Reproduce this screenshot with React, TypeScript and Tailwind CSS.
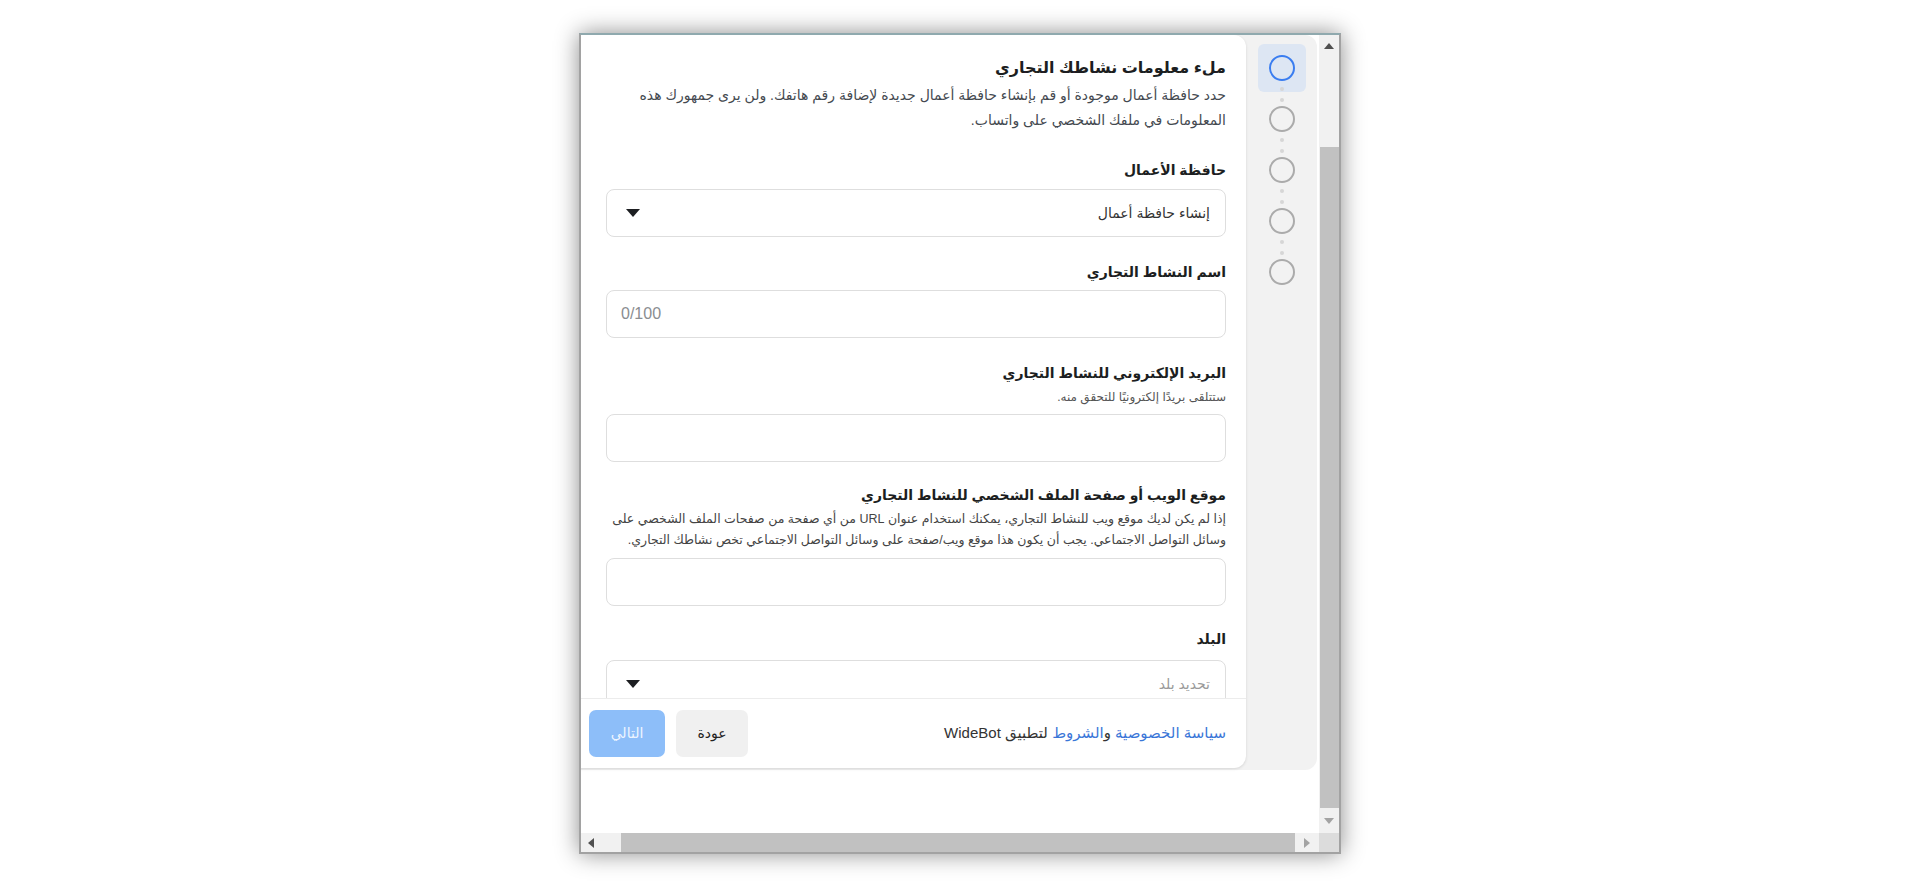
const arabic = { fontFamily: '"Liberation Sans", "DejaVu Sans", sans-serif' };

function Caret() {
  return (
    <svg width="14" height="8" viewBox="0 0 14 8" className="shrink-0">
      <polygon points="0,0 14,0 7,8" fill="#1c1e21" />
    </svg>
  );
}

function Label({ children }: { children: React.ReactNode }) {
  return <div className="text-[14px] leading-[20px] font-bold text-[#1c1e21]">{children}</div>;
}

function Box({ className = "", children }: { className?: string; children?: React.ReactNode }) {
  return (
    <div
      className={
        "h-[48px] w-[620px] rounded-[8px] border border-[#dedede] bg-white flex items-center justify-between pr-[15px] pl-[19px] " +
        className
      }
    >
      {children}
    </div>
  );
}

function Dots() {
  return (
    <div className="h-[25px] flex flex-col items-center pt-[6px] gap-[7px]">
      <div className="h-[4px] w-[4px] rounded-full bg-[#d6d6d6]" />
      <div className="h-[4px] w-[4px] rounded-full bg-[#d6d6d6]" />
    </div>
  );
}

function Circle({ active = false }: { active?: boolean }) {
  return (
    <div
      className={
        "h-[26px] w-[26px] rounded-full border-2 " + (active ? "border-[#3a7df0]" : "border-[#ababab]")
      }
    />
  );
}

function Stepper() {
  return (
    <div className="w-[71px] shrink-0 flex flex-col items-center pt-[9px]">
      <div className="h-[48px] w-[48px] rounded-[6px] bg-[#dde6f3] flex items-center justify-center -mb-[11px]">
        <Circle active />
      </div>
      <Dots />
      <Circle />
      <Dots />
      <Circle />
      <Dots />
      <Circle />
      <Dots />
      <Circle />
    </div>
  );
}

function Form() {
  return (
    <div className="flex-1 overflow-hidden pr-[20px] pt-[23px]">
      <div className="text-[16px] leading-[20px] font-bold text-[#1c1e21]">ملء معلومات نشاطك التجاري</div>
      <div className="mt-[5px] text-[14px] leading-[25px] text-[#444950] w-[610px]">
        حدد حافظة أعمال موجودة أو قم بإنشاء حافظة أعمال جديدة لإضافة رقم هاتفك. ولن يرى جمهورك هذه المعلومات في
        ملفك الشخصي على واتساب.
      </div>

      <div className="mt-[27px]">
        <Label>حافظة الأعمال</Label>
      </div>
      <Box className="mt-[9px]">
        <span className="text-[14px] text-[#333]">إنشاء حافظة أعمال</span>
        <Caret />
      </Box>

      <div className="mt-[25px]">
        <Label>اسم النشاط التجاري</Label>
      </div>
      <Box className="mt-[8px] justify-end !pl-[14px]">
        <span className="text-[16px] text-[#8a8d91]" dir="ltr">
          0/100
        </span>
      </Box>

      <div className="mt-[25px]">
        <Label>البريد الإلكتروني للنشاط التجاري</Label>
      </div>
      <div className="mt-[5px] text-[12px] leading-[18px] text-[#555]">ستتلقى بريدًا إلكترونيًا للتحقق منه.</div>
      <Box className="mt-[8px]" />

      <div className="mt-[23px]">
        <Label>موقع الويب أو صفحة الملف الشخصي للنشاط التجاري</Label>
      </div>
      <div className="mt-[4px] text-[12.5px] leading-[21px] text-[#444] w-[624px]">
        إذا لم يكن لديك موقع ويب للنشاط التجاري، يمكنك استخدام عنوان URL من أي صفحة من صفحات الملف الشخصي على وسائل
        التواصل الاجتماعي. يجب أن يكون هذا موقع ويب/صفحة على وسائل التواصل الاجتماعي تخص نشاطك التجاري.
      </div>
      <Box className="mt-[7px]" />

      <div className="mt-[23px]">
        <Label>البلد</Label>
      </div>
      <Box className="mt-[11px]">
        <span className="text-[14px] text-[#9a9a9a]">تحديد بلد</span>
        <Caret />
      </Box>
    </div>
  );
}

function Footer() {
  return (
    <div className="h-[70px] shrink-0 border-t border-[#ececec] flex items-center justify-between pr-[20px] pl-[26px]">
      <div className="text-[15px] text-[#333]">
        <span className="text-[#3a76d8]">سياسة الخصوصية</span> و<span className="text-[#3a76d8]">الشروط</span> لتطبيق
        WideBot
      </div>
      <div className="flex items-center gap-[11px]">
        <button className="h-[47px] w-[72px] rounded-[7px] bg-[#f0f0f0] text-[14px] text-[#222]">عودة</button>
        <button className="h-[47px] w-[76px] rounded-[7px] bg-[#8dbef9] text-[14px] text-[#eef5ff]">التالي</button>
      </div>
    </div>
  );
}

function Arrow({ dir, color }: { dir: "up" | "down" | "left" | "right"; color: string }) {
  const pts = {
    up: "0,7 10,7 5,1",
    down: "0,1 10,1 5,7",
    left: "7,0 7,10 1,5",
    right: "1,0 1,10 7,5",
  }[dir];
  const vertical = dir === "up" || dir === "down";
  return (
    <svg width={vertical ? 10 : 8} height={vertical ? 8 : 10} viewBox={vertical ? "0 0 10 8" : "0 0 8 10"}>
      <polygon points={pts} fill={color} />
    </svg>
  );
}

export default function App() {
  return (
    <div className="w-full h-[889px] bg-white flex justify-center pt-[33px] overflow-hidden" style={arabic}>
      <div className="w-[762px] h-[821px] border-2 border-[#a2a2a2] border-t-[#8fa9ae] shadow-[0_0_22px_rgba(0,0,0,0.45)] bg-white grid grid-cols-[1fr_20px] grid-rows-[1fr_19px]">
        <div dir="rtl" className="overflow-hidden bg-white">
          <div className="w-[754px] mr-[2px] h-[735px] bg-[#f2f2f2] rounded-r-[12px] flex">
            <Stepper />
            <div className="w-[683px] shrink-0 h-[733px] bg-white rounded-r-[12px] shadow-[0_1px_3px_rgba(0,0,0,0.12)] flex flex-col">
              <Form />
              <Footer />
            </div>
          </div>
        </div>
        <div className="bg-[#f1f1f1] flex flex-col items-center">
          <div className="h-[17px] flex items-center justify-center pt-[4px]">
            <Arrow dir="up" color="#505050" />
          </div>
          <div className="h-[95px]" />
          <div className="w-[19px] h-[661px] bg-[#c1c1c1]" />
          <div className="flex-1 flex items-center justify-center">
            <Arrow dir="down" color="#a3a3a3" />
          </div>
        </div>
        <div className="bg-[#f1f1f1] flex items-center">
          <div className="w-[40px] h-full flex items-center pl-[6px]">
            <Arrow dir="left" color="#505050" />
          </div>
          <div className="w-[674px] h-full bg-[#c1c1c1]" />
          <div className="flex-1 h-full flex items-center justify-center">
            <Arrow dir="right" color="#a3a3a3" />
          </div>
        </div>
        <div className="bg-[#dcdcdc]" />
      </div>
    </div>
  );
}
